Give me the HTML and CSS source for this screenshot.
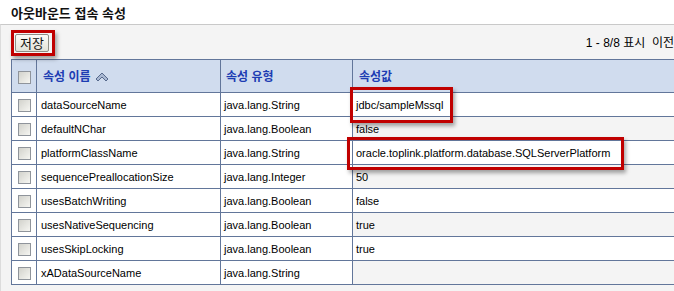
FILE: index.html
```html
<!DOCTYPE html>
<html lang="ko">
<head>
<meta charset="utf-8">
<title>아웃바운드 접속 속성</title>
<link rel="stylesheet" href="styles.css">
</head>
<body>
<div class="page">
  <h1 class="title">아웃바운드 접속 속성</h1>
  <div class="panel">
    <div class="toolbar">
      <button class="btn">저장</button>
      <div class="pager">1 - 8/8 표시&nbsp;&nbsp;이전</div>
    </div>
    <table class="grid">
      <thead>
        <tr>
          <th class="c-check"><span class="cb"></span></th>
          <th class="c-name">속성 이름 <svg class="sort" width="14" height="10" viewBox="0 0 14 10"><polygon points="1,7 7,1 13,7 11,9 7,5 3,9" fill="#a9b8d2" stroke="#56698c" stroke-width="1" stroke-linejoin="round"/></svg></th>
          <th class="c-type">속성 유형</th>
          <th class="c-val">속성값</th>
        </tr>
      </thead>
      <tbody>
        <tr><td class="c-check"><span class="cb"></span></td><td class="c-name">dataSourceName</td><td class="c-type">java.lang.String</td><td class="val">jdbc/sampleMssql</td></tr>
        <tr class="alt"><td class="c-check"><span class="cb"></span></td><td class="c-name">defaultNChar</td><td class="c-type">java.lang.Boolean</td><td class="val">false</td></tr>
        <tr><td class="c-check"><span class="cb"></span></td><td class="c-name">platformClassName</td><td class="c-type">java.lang.String</td><td class="val">oracle.toplink.platform.database.SQLServerPlatform</td></tr>
        <tr class="alt"><td class="c-check"><span class="cb"></span></td><td class="c-name">sequencePreallocationSize</td><td class="c-type">java.lang.Integer</td><td class="val">50</td></tr>
        <tr><td class="c-check"><span class="cb"></span></td><td class="c-name">usesBatchWriting</td><td class="c-type">java.lang.Boolean</td><td class="val">false</td></tr>
        <tr class="alt"><td class="c-check"><span class="cb"></span></td><td class="c-name">usesNativeSequencing</td><td class="c-type">java.lang.Boolean</td><td class="val">true</td></tr>
        <tr><td class="c-check"><span class="cb"></span></td><td class="c-name">usesSkipLocking</td><td class="c-type">java.lang.Boolean</td><td class="val">true</td></tr>
        <tr class="alt"><td class="c-check"><span class="cb"></span></td><td class="c-name">xADataSourceName</td><td class="c-type">java.lang.String</td><td class="val"></td></tr>
      </tbody>
    </table>
  </div>
  <div class="mark mark-save"></div>
  <div class="mark mark-jdbc"></div>
  <div class="mark mark-platform"></div>
</div>
</body>
</html>
```
FILE: styles.css
```css
html, body {
  margin: 0;
  padding: 0;
  background: #ffffff;
  overflow: hidden;
}
body {
  font-family: "Liberation Sans", "Noto Sans CJK KR", sans-serif;
  font-size: 11px;
  color: #000;
}
.page {
  position: relative;
  width: 760px;
  height: 291px;
}
.title {
  margin: 0;
  height: 24px;
  padding: 5px 0 0 11px;
  box-sizing: border-box;
  font-family: "Noto Sans CJK KR", sans-serif;
  font-size: 13px;
  line-height: 16px;
  font-weight: bold;
  color: #111;
}
.panel {
  border-top: 1px solid #c9c9c9;
  border-left: 1px solid #dcdcdc;
  background: #f4f4f4;
  padding: 0 0 10px 10px;
  height: 300px;
  box-sizing: border-box;
}
.toolbar {
  width: 663px;
  height: 34px;
  box-sizing: border-box;
  display: flex;
  align-items: center;
  justify-content: space-between;
  padding-left: 4px;
}
.btn {
  height: 18px;
  width: 34px;
  padding: 0;
  margin-top: 1px;
  font-family: "Noto Sans CJK KR", sans-serif;
  font-size: 13px;
  line-height: 14px;
  color: #111;
  background: linear-gradient(#fbfbf7, #e2e1d8);
  border: 1px solid #8e8e86;
  border-radius: 2px;
}
.pager {
  font-family: "Liberation Sans", "Noto Sans CJK KR", sans-serif;
  font-size: 12px;
  line-height: 14px;
  margin-top: 2px;
  white-space: nowrap;
}
.grid {
  border-collapse: collapse;
  width: 740px;
  table-layout: fixed;
  background: #ffffff;
}
.grid th, .grid td {
  border: 1px solid #62769a;
  padding: 0 0 0 3px;
  text-align: left;
  white-space: nowrap;
  overflow: hidden;
}
.grid th {
  height: 32px;
  background: #d0dcee;
  font-family: "Noto Sans CJK KR", sans-serif;
  font-size: 12px;
  font-weight: bold;
  color: #1d3db3;
  line-height: 14px;
}
.grid td {
  height: 23px;
  line-height: 14px;
}
.grid tr.alt td.val {
  background: #f4f4f4;
}
.grid th.c-check, .grid td.c-check {
  width: 24px;
  padding: 0;
  text-align: center;
}
.grid td.c-name {
  width: 179px;
  padding-left: 4px;
}
.grid th.c-name {
  width: 177px;
  padding-left: 6px;
}
.grid td.c-type {
  width: 128px;
  padding-left: 3px;
}
.grid th.c-type {
  width: 126px;
  padding-left: 5px;
}
.grid th.c-val {
  padding-left: 6px;
}
.sort {
  vertical-align: -1px;
  margin-left: 1px;
}
.cb {
  display: inline-block;
  width: 11px;
  height: 11px;
  border: 1px solid #8f949b;
  background: linear-gradient(135deg, #d2d2cc, #f6f6f2);
  vertical-align: middle;
}
.mark {
  position: absolute;
  border: 3px solid #c00000;
  box-sizing: border-box;
  box-shadow: 2px 3px 4px rgba(0, 0, 0, 0.35);
}
.mark-save {
  left: 11px;
  top: 30px;
  width: 44px;
  height: 26px;
}
.mark-jdbc {
  left: 350px;
  top: 87px;
  width: 103px;
  height: 36px;
}
.mark-platform {
  left: 347px;
  top: 137px;
  width: 277px;
  height: 33px;
}
```
